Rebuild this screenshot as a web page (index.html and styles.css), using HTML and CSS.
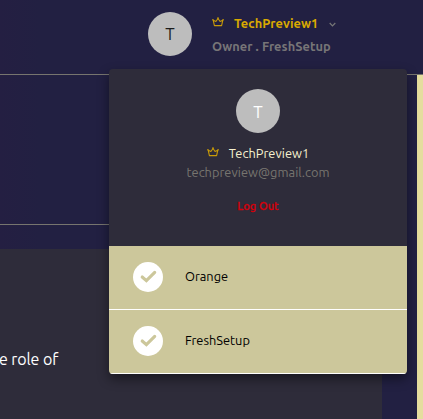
FILE: index.html
```
<!DOCTYPE html>
<html lang="en">
<head>
<meta charset="utf-8">
<title>FreshSetup</title>
<link rel="stylesheet" href="styles.css">
</head>
<body>
<svg class="defs" aria-hidden="true">
  <symbol id="crown" viewBox="0 0 12 10"><path d="M2.4 8.6 1.2 3.2 3.9 4.5 6 1.5 8.1 4.5 10.8 3.2 9.6 8.6Z" fill="none" stroke="currentColor" stroke-width="1.1" stroke-linejoin="round"/><circle cx=".9" cy="2.7" r=".8"/><circle cx="6" cy="1.1" r=".9"/><circle cx="11.1" cy="2.7" r=".8"/></symbol>
  <symbol id="check" viewBox="0 0 30 30"><circle cx="15" cy="15" r="15" fill="#fff"/><path d="M9.2 15 13.4 18.7 21.7 10.3" fill="none" stroke="#ccc79b" stroke-width="3.1" stroke-linecap="round"/></symbol>
</svg>
<header class="header">
  <div class="avatar dark">T</div>
  <div class="account">
    <div class="line"><svg class="crown"><use href="#crown"/></svg><span class="name">TechPreview1</span><svg class="chevron" viewBox="0 0 7 5"><path d="M.7 1 3.5 3.8 6.3 1" fill="none" stroke="currentColor" stroke-width="1.2"/></svg></div>
    <div class="role">Owner . FreshSetup</div>
  </div>
</header>
<div class="body">
  <main class="main">
    <section class="banner"></section>
    <section class="card"><p class="text">e role of</p></section>
  </main>
  <div class="scrollbar"></div>
</div>
<div class="menu">
  <div class="profile">
    <div class="avatar">T</div>
    <div class="user"><svg class="crown"><use href="#crown"/></svg><span class="username">TechPreview1</span></div>
    <div class="email">techpreview@gmail.com</div>
    <div class="logout">Log Out</div>
  </div>
  <div class="item"><svg class="check"><use href="#check"/></svg><span class="label">Orange</span></div>
  <div class="item"><svg class="check"><use href="#check"/></svg><span class="label">FreshSetup</span></div>
</div>
</body>
</html>
```
FILE: styles.css
```
* { box-sizing: border-box; }
body {
  margin: 0;
  height: 419px;
  overflow: hidden;
  position: relative;
  display: flex;
  flex-direction: column;
  background: linear-gradient(90deg, #241f42 0, #222042 40px, #222042 100%);
  font: 12.8px/18px Ubuntu, "Noto Sans", sans-serif;
  white-space: nowrap;
}
svg { flex: none; display: block; }
.defs { position: absolute; width: 0; height: 0; }
.header {
  flex: none;
  height: 75px;
  padding: 12px 0 0 148px;
  border-bottom: 1px solid #77756f;
  display: flex;
  gap: 20px;
}
.avatar {
  flex: none;
  width: 44px;
  height: 44px;
  border-radius: 50%;
  background: #bdbdbd;
  color: #fff;
  font-size: 17px;
  line-height: 46px;
  text-align: center;
}
.avatar.dark { color: #1c1c1c; line-height: 44px; }
.account { padding-top: 1px; font-weight: 700; letter-spacing: .06px; }
.line { display: flex; align-items: center; height: 20px; color: #d9a900; }
.crown { width: 12px; height: 10px; color: #c99b08; fill: currentColor; }
.line .crown { margin: -3px 10px 0 0; }
.name { width: 85px; }
.chevron { width: 7px; height: 5px; margin: 2px 0 0 10px; color: #777; }
.role { margin-top: 4px; color: #777577; }
.body { flex: 1; display: flex; justify-content: space-between; }
.main { width: 382px; display: flex; flex-direction: column; }
.banner { height: 150px; border-bottom: 1px solid #77756f; }
.card { margin-top: 24px; flex: 1; background: #2e2c3a; }
.text { margin: 99px 0 0 -1px; font-size: 16px; letter-spacing: -.1px; line-height: 22px; color: #fff; }
.scrollbar { width: 6px; background: #e5dd9e; }
.menu {
  position: absolute;
  left: 109px;
  top: 69px;
  width: 298px;
  border-radius: 4px;
  overflow: hidden;
  background: #2e2c3a;
  box-shadow: 0 5px 12px rgba(0, 0, 0, .45);
}
.profile { height: 177px; padding-top: 20px; display: flex; flex-direction: column; align-items: center; }
.user { display: flex; align-items: center; gap: 10px; margin-top: 11px; height: 19px; color: #f7f2cf; }
.user .crown { margin-top: -4px; }
.username { width: 80px; margin: -2px 0 0 -.5px; letter-spacing: .05px; }
.email { height: 19px; line-height: 19px; letter-spacing: .04px; color: #77756f; }
.logout {
  margin-top: 15px;
  height: 18px;
  font-size: 11px;
  font-weight: 500;
  letter-spacing: .1px;
  color: #d4000a;
  -webkit-text-stroke: .3px #d4000a;
}
.item {
  height: 64px;
  padding: 0 0 1px 24px;
  border-bottom: 1px solid #fff;
  display: flex;
  align-items: center;
  gap: 22px;
  background: #ccc79b;
  color: #000;
}
.check { width: 30px; height: 30px; }
.label { margin-top: -2px; }
```
